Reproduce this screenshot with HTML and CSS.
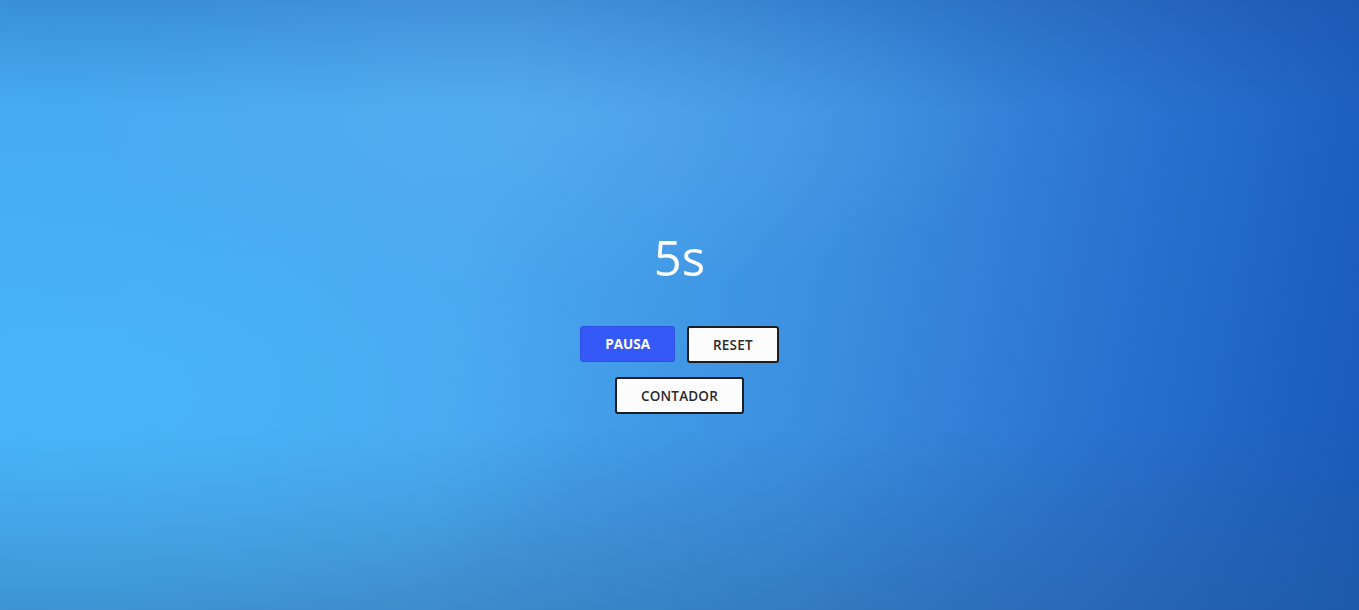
FILE: index.html
```html
<!DOCTYPE html>
<html lang="pt">
<head>
<meta charset="utf-8">
<title>Temporizador</title>
<link rel="stylesheet" href="styles.css">
</head>
<body>
<main class="app">
  <h1 class="timer">5s</h1>
  <div class="controls">
    <div class="row">
      <button class="btn btn-primary">PAUSA</button>
      <button class="btn btn-light">RESET</button>
    </div>
    <div class="row">
      <button class="btn btn-light">CONTADOR</button>
    </div>
  </div>
</main>
</body>
</html>
```

FILE: styles.css
```css
html, body {
  margin: 0;
  height: 100%;
}

body {
  font-family: "Open Sans", "Noto Sans", sans-serif;
  background:
    radial-gradient(ellipse 55% 60% at 6% 65%, rgba(74, 190, 255, 0.55), rgba(74, 190, 255, 0) 70%),
    radial-gradient(ellipse 50% 40% at 40% 20%, rgba(110, 180, 240, 0.3), rgba(110, 180, 240, 0) 70%),
    linear-gradient(180deg, rgba(20, 60, 140, 0.25) 0%, rgba(20, 60, 140, 0) 18%, rgba(20, 60, 140, 0) 70%, rgba(40, 90, 140, 0.35) 100%),
    linear-gradient(100deg, #46acf2 0%, #4aa8ef 35%, #3b8fe0 60%, #2a72cf 80%, #1759b9 100%);
  overflow: hidden;
}

.app {
  box-sizing: border-box;
  min-height: 100vh;
  padding-top: 35px;
  display: flex;
  flex-direction: column;
  align-items: center;
  justify-content: center;
}

.timer {
  margin: 0 0 43px;
  font-size: 49px;
  line-height: 52px;
  font-weight: 400;
  color: #ffffff;
}

.controls {
  display: flex;
  flex-direction: column;
  align-items: center;
  gap: 14px;
}

.row {
  display: flex;
  gap: 12px;
}

.btn {
  font-family: "Open Sans", "Noto Sans", sans-serif;
  font-size: 13.5px;
  height: 37px;
  padding: 0 24px;
  border-radius: 3px;
  cursor: pointer;
}

.btn-primary {
  height: 36px;
  background: #3459f6;
  border: 1px solid #2f4fe0;
  color: #ffffff;
  font-weight: 700;
}

.btn-light {
  background: #fcfcfc;
  border: 2px solid #1b1f24;
  color: #2a2a2a;
  font-weight: 600;
  letter-spacing: 0.2px;
}
```
